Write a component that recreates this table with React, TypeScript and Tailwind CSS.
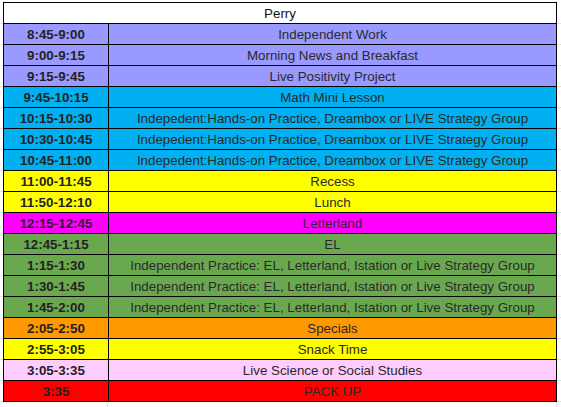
import React from 'react'

type Row = { time: string; activity: string; bg: string }

const rows: Row[] = [
    { time: '8:45-9:00', activity: 'Independent Work', bg: 'bg-[#9999ff]' },
    { time: '9:00-9:15', activity: 'Morning News and Breakfast', bg: 'bg-[#9999ff]' },
    { time: '9:15-9:45', activity: 'Live Positivity Project', bg: 'bg-[#9999ff]' },
    { time: '9:45-10:15', activity: 'Math Mini Lesson', bg: 'bg-[#00b0f0]' },
    {
        time: '10:15-10:30',
        activity: 'Indepedent:Hands-on Practice, Dreambox or LIVE Strategy Group',
        bg: 'bg-[#00b0f0]',
    },
    {
        time: '10:30-10:45',
        activity: 'Indepedent:Hands-on Practice, Dreambox or LIVE Strategy Group',
        bg: 'bg-[#00b0f0]',
    },
    {
        time: '10:45-11:00',
        activity: 'Indepedent:Hands-on Practice, Dreambox or LIVE Strategy Group',
        bg: 'bg-[#00b0f0]',
    },
    { time: '11:00-11:45', activity: 'Recess', bg: 'bg-[#ffff00]' },
    { time: '11:50-12:10', activity: 'Lunch', bg: 'bg-[#ffff00]' },
    { time: '12:15-12:45', activity: 'Letterland', bg: 'bg-[#ff00ff]' },
    { time: '12:45-1:15', activity: 'EL', bg: 'bg-[#6aa84f]' },
    {
        time: '1:15-1:30',
        activity: 'Independent Practice: EL, Letterland, Istation or Live Strategy Group',
        bg: 'bg-[#6aa84f]',
    },
    {
        time: '1:30-1:45',
        activity: 'Independent Practice: EL, Letterland, Istation or Live Strategy Group',
        bg: 'bg-[#6aa84f]',
    },
    {
        time: '1:45-2:00',
        activity: 'Independent Practice: EL, Letterland, Istation or Live Strategy Group',
        bg: 'bg-[#6aa84f]',
    },
    { time: '2:05-2:50', activity: 'Specials', bg: 'bg-[#ff9900]' },
    { time: '2:55-3:05', activity: 'Snack Time', bg: 'bg-[#ffff00]' },
    { time: '3:05-3:35', activity: 'Live Science or Social Studies', bg: 'bg-[#ffccff]' },
    { time: '3:35', activity: 'PACK UP', bg: 'bg-[#ff0000]' },
]

const App: React.FC = () => {
    return (
        <div
            className="w-[561px] h-[407px] overflow-hidden bg-white pt-[2px] text-[13.33px] leading-none"
            style={{ fontFamily: '"Liberation Sans", Arial, sans-serif' }}
        >
            {/* header row */}
            <div className="flex h-[22px]">
                <div className="w-[3px] border-b border-[#e2e2e2]" />
                <div className="w-[554px] flex items-center justify-center pt-px border border-black bg-white text-[#111]">
                    Perry
                </div>
                <div className="flex-1 border-b border-[#e2e2e2]" />
            </div>
            {rows.map((row, i) => (
                <div key={i} className="flex h-[21px]">
                    <div className="w-[3px] border-b border-[#e2e2e2]" />
                    <div
                        className={`w-[106px] flex items-center justify-center pt-px border-l border-r border-b border-black font-bold text-[#222] ${row.bg}`}
                    >
                        {row.time}
                    </div>
                    <div
                        className={`w-[448px] flex items-center justify-center pt-px border-r border-b border-black text-[#2a2a2a] whitespace-nowrap ${row.bg}`}
                    >
                        {row.activity}
                    </div>
                    <div className="flex-1 border-b border-[#e2e2e2]" />
                </div>
            ))}
            {/* spreadsheet gridlines below the table */}
            <div className="flex h-[6px]">
                <div className="w-[108px] border-r border-[#e2e2e2]" />
                <div className="w-[449px] border-r border-[#e2e2e2]" />
            </div>
        </div>
    )
}

export default App
